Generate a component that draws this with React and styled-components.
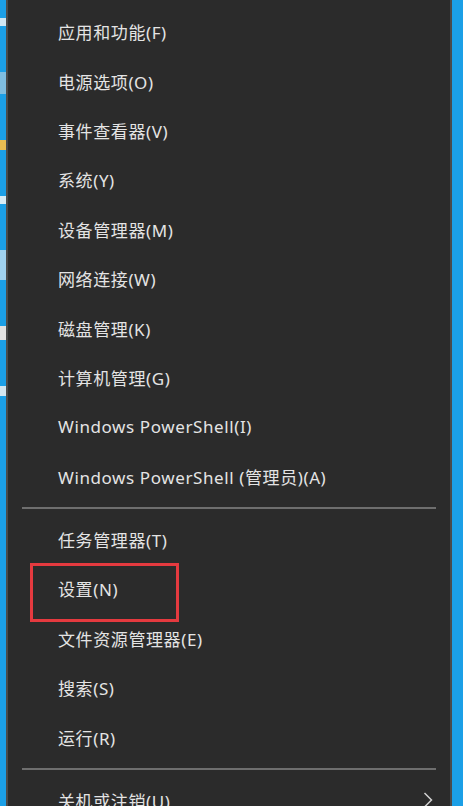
import React from 'react';
import styled, { createGlobalStyle } from 'styled-components';

const Global = createGlobalStyle`
  html, body {
    margin: 0;
    padding: 0;
    background: #2b2b2b;
    overflow: hidden;
  }
`;

const Screen = styled.div`
  display: flex;
  width: 463px;
  height: 806px;
  overflow: hidden;
`;

const Desktop = styled.div`
  width: ${p => p.w}px;
  background: #1b9fe6;
  display: flex;
  flex-direction: column;
  gap: 46px;
  padding-top: 18px;
  box-sizing: border-box;
  overflow: hidden;
`;

const DesktopBit = styled.div`
  height: ${p => p.h}px;
  background: ${p => p.c};
`;

const Edge = styled.div`
  width: 2px;
  background: #4a4a4a;
`;

const Menu = styled.div`
  flex: 1;
  background: #2b2b2b;
  padding-top: 7px;
  font-family: "Noto Sans", "Noto Sans CJK SC", sans-serif;
  font-size: 17px;
  letter-spacing: 0.6px;
  color: #e4e4e4;
`;

const Item = styled.div`
  position: relative;
  height: 49.4px;
  display: flex;
  align-items: center;
  padding-left: 50px;
  white-space: nowrap;

  ${p => p.highlighted && `
    &::after {
      content: '';
      position: absolute;
      left: 22px;
      top: -1px;
      width: 143px;
      height: 53px;
      border: 3px solid #e53a3f;
    }
  `}
`;

const Separator = styled.div`
  height: 14px;
  display: flex;
  align-items: center;
  padding: 0 14px 0 14px;

  &::before {
    content: '';
    flex: 1;
    height: 2px;
    background: #6e6e6e;
  }
`;

const Chevron = styled.svg`
  position: absolute;
  right: 17px;
  top: 16px;
`;

const groupA = [
  '应用和功能(F)',
  '电源选项(O)',
  '事件查看器(V)',
  '系统(Y)',
  '设备管理器(M)',
  '网络连接(W)',
  '磁盘管理(K)',
  '计算机管理(G)',
  'Windows PowerShell(I)',
  'Windows PowerShell (管理员)(A)',
];

const groupB = [
  '任务管理器(T)',
  '设置(N)',
  '文件资源管理器(E)',
  '搜索(S)',
  '运行(R)',
];

const App = () => {
  return (
    <Screen>
      <Global />
      <Desktop w={6}>
        <DesktopBit h={8} c="#cfe6f2" />
        <DesktopBit h={22} c="#7fbde0" />
        <DesktopBit h={10} c="#e9bd52" />
        <DesktopBit h={8} c="#d6ebf5" />
        <DesktopBit h={30} c="#9fd1ee" />
        <DesktopBit h={14} c="#e2e2e2" />
        <DesktopBit h={10} c="#d2e5ef" />
      </Desktop>
      <Edge />
      <Menu>
        {groupA.map(t => <Item key={t}>{t}</Item>)}
        <Separator />
        {groupB.map(t => (
          <Item key={t} highlighted={t === '设置(N)'}>{t}</Item>
        ))}
        <Separator />
        <Item>
          关机或注销(U)
          <Chevron width="10" height="16" viewBox="0 0 10 16">
            <path d="M1.5 1 L8.5 8 L1.5 15" fill="none" stroke="#d0d0d0" strokeWidth="1.5" />
          </Chevron>
        </Item>
      </Menu>
      <Edge />
      <Desktop w={11} />
    </Screen>
  );
};

export default App;
